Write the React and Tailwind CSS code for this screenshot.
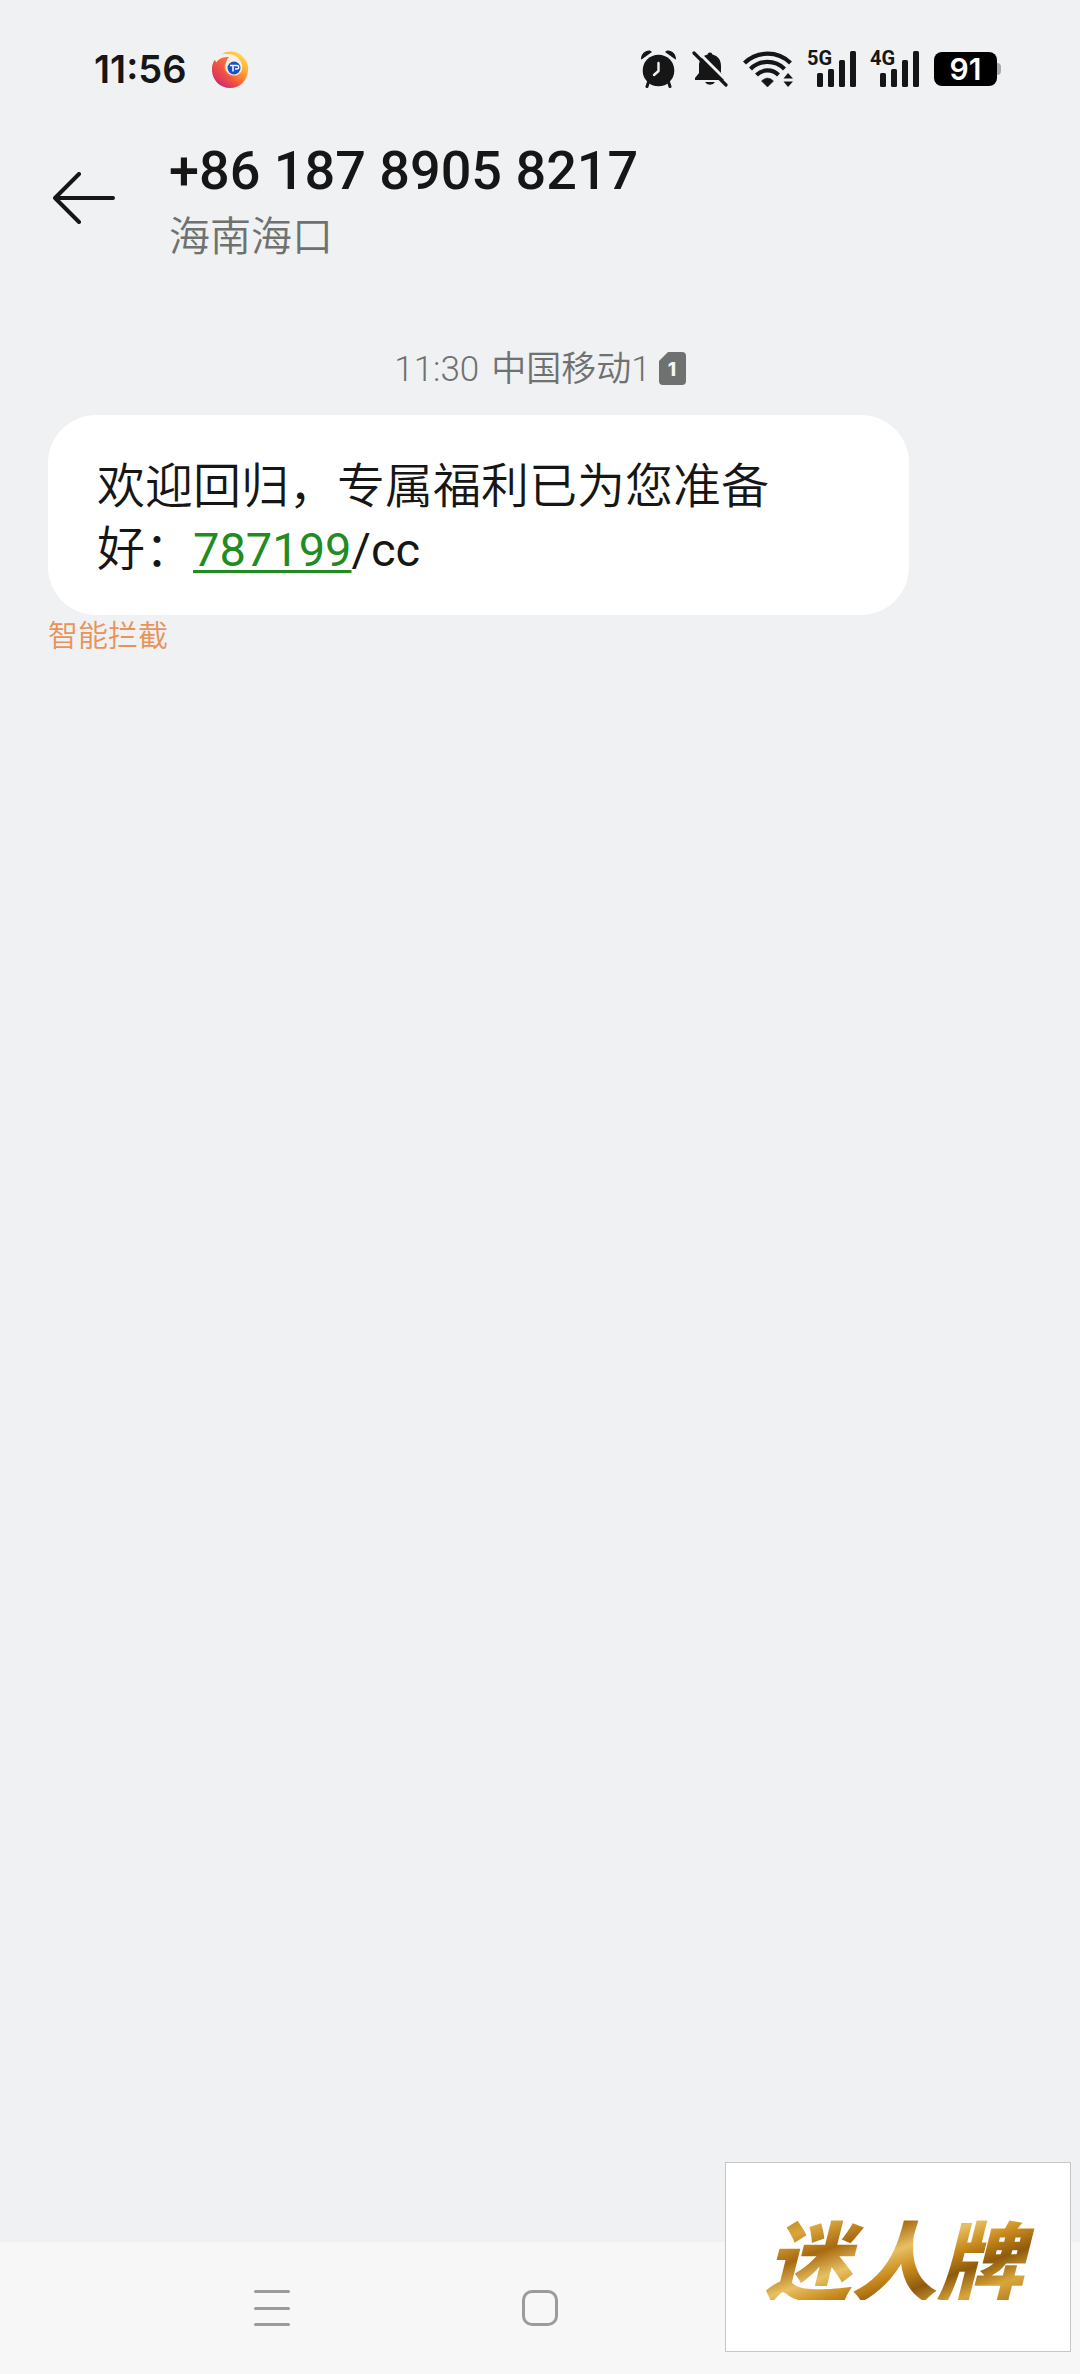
const message = {
    time: "11:30",
    carrier: "中国移动1",
    sim: "1",
    before: "欢迎回归，专属福利已为您准备好：",
    link: "787199",
    after: "/cc",
    tag: "智能拦截",
};

function BrowserIcon(){
    return(
        <svg className="w-[37px] h-[37px]" viewBox="0 0 37 37" aria-hidden="true">
            <defs>
                <linearGradient id="foxBody" x1="0.85" y1="0.1" x2="0.25" y2="0.95">
                    <stop offset="0" stopColor="#ffd84a" />
                    <stop offset="0.4" stopColor="#ff9a35" />
                    <stop offset="0.7" stopColor="#f4563c" />
                    <stop offset="1" stopColor="#c92a72" />
                </linearGradient>
                <linearGradient id="foxHead" x1="0.8" y1="0" x2="0.1" y2="0.8">
                    <stop offset="0" stopColor="#f9793a" />
                    <stop offset="1" stopColor="#e23a55" />
                </linearGradient>
            </defs>
            <path d="M10 3 C17 -1 26 0 31 6 C35 10 37 15 36 20 C35 30 28 37 18 37 C8 37 0 29 0 19 C0 15 1 11 3 9 L4 12 C6 8 10 6 17 6 C24 5 29 9 30 15 C28 7 20 2 10 3 Z" fill="url(#foxBody)" />
            <path d="M11 5 C16 2 24 3 28 9 C31 14 31 19 28 22 C24 26 18 25 15 21 C12 17 13 9 17 6 Z" fill="#fbeedd" />
            <path d="M0 20 C0 15 1 11 3 9 L4 12 C7 8 11 6 17 6 C14 9 15 11 12 15 C11 21 15 25 21 27 C10 30 3 27 0 20 Z" fill="url(#foxHead)" />
            <circle cx="22" cy="17" r="6.500" fill="#1d50c8" />
            <path d="M18 14.500 h7 a1.500 1.500 0 0 1 0 3.500 h-2 M21 14.500 v6" fill="none" stroke="#fff" strokeWidth="1.500" />
        </svg>
    )
}

function AlarmIcon(){
    return(
        <svg className="w-[37px] h-[38px]" viewBox="0 0 37 38" aria-hidden="true">
            <circle cx="18.500" cy="20.500" r="15.800" fill="#161616" />
            <path d="M1 9 C1 4 5 0 10 0.500 L12 2 L1.500 9.500 Z M36 9 C36 4 32 0 27 0.500 L25 2 L35.500 9.500 Z" fill="#161616" />
            <path d="M8.500 32 L7 36.500 M28.500 32 L30 36.500" stroke="#161616" strokeWidth="3" strokeLinecap="round" />
            <path d="M18.500 13 V21 L14 25" fill="none" stroke="#eff1f3" strokeWidth="2.400" strokeLinecap="round" strokeLinejoin="round" />
        </svg>
    )
}

function MutedBellIcon(){
    return(
        <svg className="w-[36px] h-[36px]" viewBox="0 0 36 36" aria-hidden="true">
            <path d="M18 1.500 a2.500 2.500 0 0 1 2.500 2 C26 5 29 9 29 15 V22 L33 28 V29 H3 V27 L7 22 V15 C7 9 10 5 15.500 3.500 A2.500 2.500 0 0 1 18 1.500 Z M13 31 H23 A5.500 4.500 0 0 1 13 31 Z" fill="#161616" />
            <path d="M4 -1 L38 33" stroke="#eff1f3" strokeWidth="3" />
            <path d="M2 2 L34 34" stroke="#161616" strokeWidth="3.200" strokeLinecap="round" />
        </svg>
    )
}

function WifiIcon(){
    return(
        <svg className="w-[50px] h-[36px]" viewBox="0 0 50 36" aria-hidden="true">
            <g fill="none" stroke="#161616" strokeWidth="4.200">
                <path d="M1.500 12 A33 33 0 0 1 47.500 12" />
                <path d="M7.500 18 A24 24 0 0 1 41.500 18" />
                <path d="M13.500 24 A15.500 15.500 0 0 1 35.500 24" />
            </g>
            <path d="M24.500 36 L18.500 30 Q24.500 24 30.500 30 Z" fill="#161616" stroke="#161616" strokeWidth="0.500" />
            <path d="M40.500 27.500 L45 22 L50 27.500 Z M40.500 30.500 H50 L45 36 Z" fill="#161616" />
        </svg>
    )
}

function SignalIcon({ label }){
    return(
        <svg className="w-[48px] h-[38px] overflow-visible" viewBox="0 0 48 38" role="img" aria-label={label}>
            <text x="-1" y="15" fontSize="20" className="font-['Roboto',sans-serif] font-bold" fill="#161616">{label}</text>
            <g fill="#161616">
                <rect x="9" y="23" width="6" height="14" rx="1.500" />
                <rect x="20" y="19" width="6" height="18" rx="1.500" />
                <rect x="31" y="10" width="6" height="27" rx="1.500" />
                <rect x="42" y="1" width="6" height="36" rx="1.500" />
            </g>
        </svg>
    )
}

function StatusBar(){
    return(
        <div className="flex items-center justify-between h-[138px] pl-[94px] pr-[79px]">
            <div className="flex items-center gap-[26px]">
                <span className="font-['Inter',sans-serif] text-[38px] leading-none font-semibold">11:56</span>
                <BrowserIcon />
            </div>
            <div className="flex items-center gap-[15px]">
                <AlarmIcon />
                <MutedBellIcon />
                <WifiIcon />
                <SignalIcon label="5G" />
                <SignalIcon label="4G" />
                <div className="flex items-center">
                    <span className="flex items-center justify-center w-[63px] h-[34px] rounded-lg bg-black text-white font-['Inter',sans-serif] text-[30px] font-semibold">91</span>
                    <span className="w-1 h-3 rounded-r-sm bg-[#a8a9aa]" />
                </div>
            </div>
        </div>
    )
}

function SimBadge({ number }){
    return(
        <svg className="w-[27px] h-[33px]" viewBox="0 0 27 33" role="img" aria-label={number}>
            <path d="M9 0 H23 Q27 0 27 4 V29 Q27 33 23 33 H4 Q0 33 0 29 V9 Z" fill="#6f7171" />
            <text x="13" y="24" textAnchor="middle" fontSize="19" className="font-['Inter',sans-serif] font-extrabold" fill="#f4f5f6">{number}</text>
        </svg>
    )
}

function App(){
    return(
        <div className="relative flex flex-col min-h-screen bg-[#eff1f3] text-[#161616] font-['Roboto','Noto_Sans_CJK_SC',sans-serif]">
            <StatusBar />

            <header className="flex items-start gap-[54px] px-[53px]">
                <button type="button" aria-label="返回" className="flex items-center h-[120px] cursor-pointer">
                    <svg className="w-[62px] h-[52px]" viewBox="0 0 62 52" fill="none" stroke="#161616" strokeWidth="4" strokeLinecap="round" strokeLinejoin="round">
                        <path d="M26 2 L2 26 L26 50 M2 26 H60" />
                    </svg>
                </button>
                <div className="flex flex-col">
                    <h1 className="text-[54px] leading-[66px] font-medium">+86 187 8905 8217</h1>
                    <p className="text-[41px] leading-[66px] font-[350] text-[#6f7171]">海南海口</p>
                </div>
            </header>

            <main className="flex-1 px-12 pt-[74px]">
                <div className="flex items-center justify-center gap-2 h-[48px] text-[35px] font-[350] text-[#6f7171]">
                    <span className="flex gap-3 pt-1">
                        <time>{message.time}</time>
                        <span>{message.carrier}</span>
                    </span>
                    <SimBadge number={message.sim} />
                </div>
                <p className="w-7/8 mt-[23px] px-[49px] pt-10 pb-[34px] rounded-[48px] bg-white text-[48px] leading-[63px] font-[350]">
                    {message.before}
                    <a href="#" className="text-[47px] leading-none font-normal text-[#228b22] underline decoration-3 underline-offset-4">{message.link}</a>
                    <span className="text-[47px] leading-none font-normal">{message.after}</span>
                </p>
                <p className="text-[30px] leading-[42px] font-[350] text-[#e8935a]">{message.tag}</p>
            </main>

            <nav className="grid grid-cols-3 items-center justify-items-center h-[132px] px-[138px] bg-[#f7f7f7]">
                <button type="button" aria-label="最近任务" className="flex flex-col justify-between w-9 h-9 cursor-pointer">
                    <span className="w-full h-[3px] rounded-full bg-[#9b9b9b]" />
                    <span className="w-full h-[3px] rounded-full bg-[#9b9b9b]" />
                    <span className="w-full h-[3px] rounded-full bg-[#9b9b9b]" />
                </button>
                <button type="button" aria-label="主屏幕" className="w-9 h-9 rounded-[10px] border-3 border-[#9b9b9b] cursor-pointer" />
            </nav>

            {/* brand banner floats over the navigation bar */}
            <div className="absolute right-[9px] bottom-[22px] flex items-center justify-center w-[346px] h-[190px] bg-white border border-[#c4c6c8]">
                <span className="pl-2 pr-4 text-[86px] leading-none font-black italic font-['Noto_Sans_CJK_SC',sans-serif] text-transparent bg-clip-text bg-[linear-gradient(160deg,#a9700f_0%,#d9a63c_18%,#a8690f_32%,#e8c063_46%,#c98a1d_58%,#8f5a0c_70%,#d9a63c_84%,#a86c12_100%)]">迷人牌</span>
            </div>
        </div>
    )
}
export default App;
